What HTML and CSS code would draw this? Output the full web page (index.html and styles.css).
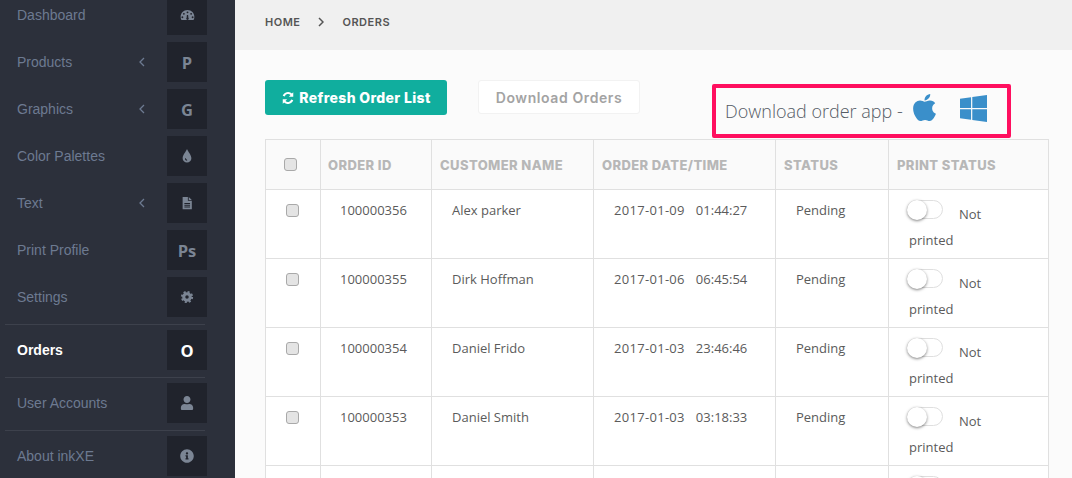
FILE: index.html
```html
<!DOCTYPE html>
<html lang="en">
<head>
<meta charset="utf-8">
<title>Orders</title>
<link rel="stylesheet" href="styles.css">
</head>
<body>
<div class="app">
  <nav class="sidebar">
    <a class="nav-item"><span class="nav-label">Dashboard</span><span class="nav-icon"><svg class="ico ico-dash" viewBox="0 0 24 18"><path fill-rule="evenodd" d="M12 1C5.600 1 1 6 1 12c0 2 .6 3.600 1.400 5h19.200c.8-1.400 1.400-3 1.400-5C23 6 18.400 1 12 1zM12 3.200a1.500 1.500 0 1 1 0 3 1.500 1.500 0 0 1 0-3zM6.200 5.600a1.500 1.500 0 1 1 0 3 1.500 1.500 0 0 1 0-3zM17.800 5.600a1.500 1.500 0 1 1 0 3 1.500 1.500 0 0 1 0-3zM3.800 11a1.500 1.500 0 1 1 0 3 1.500 1.500 0 0 1 0-3zM20.200 11a1.500 1.500 0 1 1 0 3 1.500 1.500 0 0 1 0-3zM11 9h2l.4 4.300a2 2 0 1 1-2.800 0z"/></svg></span></a>
    <a class="nav-item"><span class="nav-label">Products</span><svg class="chev" viewBox="0 0 6 10"><path d="M5 1 1 5l4 4"/></svg><span class="nav-icon">P</span></a>
    <a class="nav-item"><span class="nav-label">Graphics</span><svg class="chev" viewBox="0 0 6 10"><path d="M5 1 1 5l4 4"/></svg><span class="nav-icon">G</span></a>
    <a class="nav-item"><span class="nav-label">Color Palettes</span><span class="nav-icon"><svg class="ico" viewBox="0 0 16 16"><path fill-rule="evenodd" d="M8 0c1 3 5 6.500 5 10.500a5 5 0 0 1-10 0C3 6.500 7 3 8 0zM5.800 10.500a2.400 2.400 0 0 0 2.400 2.800l-.2-1.200a1.400 1.400 0 0 1-1.200-1.600z"/></svg></span></a>
    <a class="nav-item"><span class="nav-label">Text</span><svg class="chev" viewBox="0 0 6 10"><path d="M5 1 1 5l4 4"/></svg><span class="nav-icon"><svg class="ico" viewBox="0 0 16 16"><path fill-rule="evenodd" d="M3 1h6v4.500h4.500V15H3zM10 1l3.500 3.500H10zM5 8v1h6.500V8zM5 10v1h6.500v-1zM5 12v1h6.500v-1z"/></svg></span></a>
    <a class="nav-item"><span class="nav-label">Print Profile</span><span class="nav-icon">Ps</span></a>
    <a class="nav-item"><span class="nav-label">Settings</span><span class="nav-icon"><svg class="ico" viewBox="0 0 16 16"><circle class="cog-teeth" cx="8" cy="8" r="5.800"/><path fill-rule="evenodd" d="M8 2.500a5.500 5.500 0 1 1 0 11 5.500 5.500 0 0 1 0-11zM8 6a2 2 0 1 0 0 4 2 2 0 0 0 0-4z"/></svg></span></a>
    <a class="nav-item nav-rule active"><span class="nav-label">Orders</span><span class="nav-icon">O</span></a>
    <a class="nav-item nav-rule"><span class="nav-label">User Accounts</span><span class="nav-icon"><svg class="ico" viewBox="0 0 448 512"><path d="M224 256c70.700 0 128-57.300 128-128S294.700 0 224 0 96 57.300 96 128s57.300 128 128 128zm89.600 32h-16.700c-22.200 10.200-46.900 16-72.900 16s-50.600-5.800-72.900-16h-16.700C60.200 288 0 348.200 0 422.400V464c0 26.500 21.500 48 48 48h352c26.500 0 48-21.500 48-48v-41.600c0-74.200-60.200-134.400-134.400-134.400z"/></svg></span></a>
    <a class="nav-item nav-rule"><span class="nav-label">About inkXE</span><span class="nav-icon"><svg class="ico" viewBox="0 0 512 512"><path d="M256 8C119 8 8 119.100 8 256c0 137 111 248 248 248s248-111 248-248C504 119.100 393 8 256 8zm0 110c23.200 0 42 18.800 42 42s-18.800 42-42 42-42-18.800-42-42 18.800-42 42-42zm56 254c0 6.600-5.400 12-12 12h-88c-6.600 0-12-5.400-12-12v-24c0-6.600 5.400-12 12-12h12v-64h-12c-6.600 0-12-5.400-12-12v-24c0-6.600 5.400-12 12-12h64c6.600 0 12 5.400 12 12v100h12c6.600 0 12 5.400 12 12v24z"/></svg></span></a>
  </nav>
  <main class="main">
    <header class="crumbs">
      <span>HOME</span>
      <svg class="crumb-sep" viewBox="0 0 6 10"><path d="M1 1l4 4-4 4"/></svg>
      <span>ORDERS</span>
    </header>
    <section class="content">
      <div class="toolbar">
        <button class="btn btn-primary"><svg class="sync" viewBox="0 0 16 16"><path d="M14 1.500v5H9l1.900-1.900A4 4 0 0 0 4.300 6.200L2 5.500a6.400 6.400 0 0 1 10.500-2.600z"/><path d="M2 14.500v-5h5l-1.900 1.900a4 4 0 0 0 6.600-1.600l2.300.7a6.400 6.400 0 0 1-10.500 2.600z"/></svg>Refresh Order List</button>
        <button class="btn btn-muted">Download Orders</button>
        <div class="callout">
          <span class="callout-text">Download order app -</span>
          <svg class="os os-apple" viewBox="0 0 384 512"><path d="M318.700 268.700c-.2-36.700 16.400-64.400 50-84.800-18.800-26.900-47.200-41.700-84.700-44.600-35.500-2.800-74.300 20.700-88.500 20.700-15 0-49.400-19.700-76.400-19.700C63.300 141.200 4 184.800 4 273.500q0 39.300 14.400 81.200c12.800 36.700 59 126.700 107.200 125.200 25.200-.6 43-17.900 75.800-17.900 31.800 0 48.300 17.900 76.400 17.900 48.600-.7 90.400-82.500 102.600-119.300-65.200-30.700-61.700-90-61.700-91.900zm-56.600-164.200c27.300-32.400 24.800-61.900 24-72.500-24.100 1.400-52 16.400-67.900 34.900-17.500 19.800-27.800 44.300-25.600 71.900 26.100 2 49.900-11.400 69.500-34.300z"/></svg>
          <svg class="os os-win" viewBox="0 32 448 448"><path d="M0 93.700l183.600-25.300v177.400H0V93.700zm0 324.600l183.600 25.300V268.400H0v149.900zm203.800 28L448 480V268.400H203.800v177.900zm0-380.600v180.100H448V32L203.800 65.700z"/></svg>
        </div>
      </div>
      <table class="orders">
        <colgroup><col class="c-check"><col class="c-id"><col class="c-name"><col class="c-date"><col class="c-status"><col class="c-print"></colgroup>
        <thead>
          <tr><th class="th-check"><input type="checkbox" class="check"></th><th class="th-id">ORDER ID</th><th>CUSTOMER NAME</th><th>ORDER DATE/TIME</th><th>STATUS</th><th>PRINT STATUS</th></tr>
        </thead>
        <tbody>
          <tr><td class="td-check"><input type="checkbox" class="check"></td><td class="td-id">100000356</td><td>Alex parker</td><td class="date"><span class="day">2017-01-09</span><span class="time">01:44:27</span></td><td>Pending</td><td class="print"><span class="toggle"></span><span class="not">Not</span> printed</td></tr>
          <tr><td class="td-check"><input type="checkbox" class="check"></td><td class="td-id">100000355</td><td>Dirk Hoffman</td><td class="date"><span class="day">2017-01-06</span><span class="time">06:45:54</span></td><td>Pending</td><td class="print"><span class="toggle"></span><span class="not">Not</span> printed</td></tr>
          <tr><td class="td-check"><input type="checkbox" class="check"></td><td class="td-id">100000354</td><td>Daniel Frido</td><td class="date"><span class="day">2017-01-03</span><span class="time">23:46:46</span></td><td>Pending</td><td class="print"><span class="toggle"></span><span class="not">Not</span> printed</td></tr>
          <tr><td class="td-check"><input type="checkbox" class="check"></td><td class="td-id">100000353</td><td>Daniel Smith</td><td class="date"><span class="day">2017-01-03</span><span class="time">03:18:33</span></td><td>Pending</td><td class="print"><span class="toggle"></span><span class="not">Not</span> printed</td></tr>
          <tr><td class="td-check"><input type="checkbox" class="check"></td><td class="td-id"></td><td></td><td class="date"></td><td></td><td class="print"><span class="toggle"></span></td></tr>
        </tbody>
      </table>
    </section>
  </main>
</div>
</body>
</html>
```
FILE: styles.css
```css
* { box-sizing: border-box; }
html, body { margin: 0; height: 100%; overflow: hidden; }
body { font-family: "Open Sans", sans-serif; background: #fbfbfb; }

.app { display: flex; height: 478px; overflow: hidden; }

.sidebar {
  width: 235px;
  flex: none;
  height: 478px;
  background: #2c303b;
  padding: 0 28px 0 5px;
  overflow: hidden;
}
.nav-item {
  display: flex;
  align-items: center;
  height: 40px;
  margin-bottom: 7px;
  padding-left: 12px;
  color: #6d7a91;
  font: 14px "Liberation Sans", Arial, sans-serif;
}
.nav-item:first-child { margin-top: -5px; }
.nav-rule { position: relative; margin-top: 13px; margin-bottom: 0; }
.nav-rule::before {
  content: "";
  position: absolute;
  left: 0;
  right: 2px;
  top: -6px;
  height: 1px;
  background: #3d414c;
}
.nav-label { flex: 1; }
.active { color: #fff; font-weight: 700; }
.chev {
  width: 6px;
  height: 10px;
  margin-right: 22px;
  fill: none;
  stroke: #6d7a91;
  stroke-width: 1.300;
}
.nav-icon {
  width: 40px;
  height: 40px;
  flex: none;
  display: flex;
  align-items: center;
  justify-content: center;
  background: #20232c;
  color: #7b8594;
  font: 700 16.500px "Open Sans", sans-serif;
}
.active .nav-icon { color: #fff; }
.ico { width: 14px; height: 14px; fill: #7b8594; }
.ico-dash { width: 15px; height: 12px; }
.cog-teeth { fill: none; stroke: #7b8594; stroke-width: 2.400; stroke-dasharray: 2.300 2.250; }

.main { flex: 1; min-width: 0; display: flex; flex-direction: column; }
.crumbs {
  height: 50px;
  flex: none;
  background: #f0f0f0;
  padding: 0 0 6px 30px;
  display: flex;
  align-items: center;
  color: #555;
  font: 600 11px Inter, sans-serif;
  letter-spacing: .5px;
}
.crumb-sep { width: 6px; height: 10px; margin: 0 18px 0 18px; fill: none; stroke: #555; stroke-width: 1.500; }

.content { flex: 1; padding: 30px 23px 0 30px; background: #fbfbfb; }
.toolbar { display: flex; align-items: flex-start; height: 59px; }
.btn {
  border: 0;
  border-radius: 3px;
  font: 800 14px Inter, sans-serif;
  letter-spacing: .35px;
  display: flex;
  align-items: center;
  justify-content: center;
}
.btn-primary { width: 182px; height: 35px; background: #10ae9e; color: #fff; }
.sync { width: 14px; height: 14px; margin-right: 4px; fill: #fff; }
.btn-muted {
  width: 162px;
  height: 34px;
  margin-left: 31px;
  background: #fff;
  border: 1px solid #f2f2f2;
  color: #a3a3a3;
  font-weight: 600;
  letter-spacing: .6px;
}
.callout {
  width: 299px;
  height: 54px;
  margin: 4px 0 0 72px;
  border: 4px solid #ff0f5f;
  border-radius: 2px;
  display: flex;
  align-items: center;
  padding-left: 9px;
  color: #555c66;
}
.callout-text { font: 300 18px "Open Sans", sans-serif; }
.os { fill: #3a8fca; flex: none; }
.os-apple { width: 25px; height: 31px; margin: -7px 0 0 9px; }
.os-win { width: 27px; height: 27px; margin: -5px 0 0 23px; }

.orders {
  width: 783px;
  table-layout: fixed;
  border-collapse: collapse;
  font-size: 13px;
  color: #5b5b5b;
}
.c-check { width: 55px; }
.c-id { width: 111px; }
.c-name { width: 162px; }
.c-date { width: 182px; }
.c-status { width: 113px; }
.c-print { width: 160px; }
.orders th, .orders td { border: 1px solid #e0e0e0; }
.orders th {
  height: 50px;
  padding: 0 8px;
  text-align: left;
  background: #fafafa;
  color: #b7b7b7;
  font: 800 13px Inter, sans-serif;
  letter-spacing: .4px;
  white-space: nowrap;
}
.orders td {
  height: 69px;
  padding: 11px 10px 0 20px;
  vertical-align: top;
  background: #fff;
  line-height: 18px;
}
.orders .th-id { padding-left: 7px; }
.orders .td-id { padding-left: 19px; }
.orders .th-check { padding: 0 0 0 18px; }
.orders .td-check { padding: 14px 0 0 20px; }
.check {
  appearance: none;
  display: block;
  width: 13px;
  height: 13px;
  margin: 0;
  border: 1px solid #a9a9a9;
  border-radius: 3px;
  background: #e4e4e4;
}
.date { white-space: nowrap; }
.day { letter-spacing: .3px; }
.time { margin-left: 11px; }
.orders .print { padding: 8px 30px 0 20px; line-height: 28px; }
.toggle {
  display: inline-block;
  position: relative;
  width: 36px;
  height: 19px;
  margin: 2px 16px 0 -2px;
  vertical-align: top;
  border: 1px solid #dfdfdf;
  border-radius: 10px;
  background: #fff;
}
.toggle::after {
  content: "";
  position: absolute;
  left: -1px;
  top: -1px;
  width: 20px;
  height: 20px;
  border-radius: 50%;
  background: #fff;
  box-shadow: 0 1px 3px rgba(0,0,0,.5);
}
.not { position: relative; top: 2px; }
```
